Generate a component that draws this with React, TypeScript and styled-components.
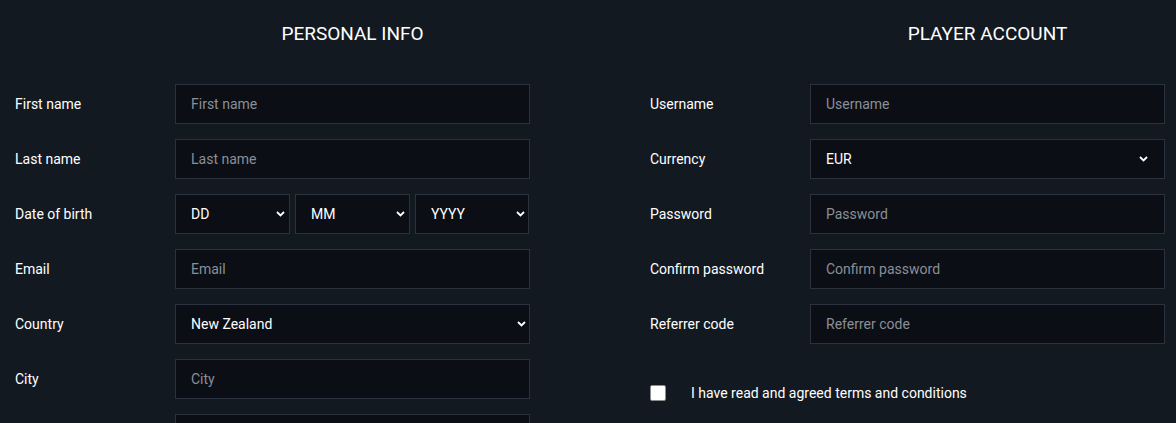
import React from "react";
import styled, { createGlobalStyle } from "styled-components";

const GlobalStyle = createGlobalStyle`
  html, body {
    margin: 0;
    padding: 0;
    background: #131921;
  }
  body {
    font-family: Roboto, "Liberation Sans", sans-serif;
    color: #ffffff;
  }
`;

const Chevron = ({ right }: { right: number }) => (
  <ArrowIcon $right={right} width="9" height="6" viewBox="0 0 9 6">
    <path d="M1 1l3.5 3.5L8 1" fill="none" stroke="#ffffff" strokeWidth="1.8" />
  </ArrowIcon>
);

const SelectBox = ({
  value,
  arrowRight = 16,
}: {
  value: string;
  arrowRight?: number;
}) => (
  <SelectWrap>
    <Select defaultValue={value}>
      <option>{value}</option>
    </Select>
    <Chevron right={arrowRight} />
  </SelectWrap>
);

const App = () => {
  return (
    <Page>
      <GlobalStyle />
      <Column>
        <Heading>PERSONAL INFO</Heading>
        <Row>
          <Label>First name</Label>
          <Input placeholder="First name" />
        </Row>
        <Row>
          <Label>Last name</Label>
          <Input placeholder="Last name" />
        </Row>
        <Row>
          <Label>Date of birth</Label>
          <DateGroup>
            <SelectBox value="DD" arrowRight={5} />
            <SelectBox value="MM" arrowRight={5} />
            <SelectBox value="YYYY" arrowRight={4} />
          </DateGroup>
        </Row>
        <Row>
          <Label>Email</Label>
          <Input placeholder="Email" />
        </Row>
        <Row>
          <Label>Country</Label>
          <SelectBox value="New Zealand" arrowRight={4} />
        </Row>
        <Row>
          <Label>City</Label>
          <Input placeholder="City" />
        </Row>
        <Row>
          <Label>Address</Label>
          <Input placeholder="Address" />
        </Row>
      </Column>

      <Column>
        <Heading>PLAYER ACCOUNT</Heading>
        <Row>
          <Label>Username</Label>
          <Input placeholder="Username" />
        </Row>
        <Row>
          <Label>Currency</Label>
          <SelectBox value="EUR" arrowRight={17} />
        </Row>
        <Row>
          <Label>Password</Label>
          <Input type="password" placeholder="Password" />
        </Row>
        <Row>
          <Label>Confirm password</Label>
          <Input type="password" placeholder="Confirm password" />
        </Row>
        <Row>
          <Label>Referrer code</Label>
          <Input placeholder="Referrer code" />
        </Row>
        <CheckRow>
          <CheckBox type="checkbox" />
          <CheckText>I have read and agreed terms and conditions</CheckText>
        </CheckRow>
      </Column>
    </Page>
  );
};

const Page = styled.div`
  display: grid;
  grid-template-columns: 515px 515px;
  column-gap: 120px;
  padding: 0 11px 0 15px;
  height: 423px;
  overflow: hidden;
`;

const Column = styled.div`
  display: flex;
  flex-direction: column;
  gap: 15px;
`;

const Heading = styled.h2`
  margin: 23px 0 25px 160px;
  text-align: center;
  font-size: 19px;
  font-weight: 400;
  line-height: 21px;
  color: #ffffff;
`;

const Row = styled.div`
  display: grid;
  grid-template-columns: 160px 355px;
  align-items: center;
  height: 40px;
`;

const Label = styled.label`
  font-size: 14px;
  font-weight: 400;
  color: #ffffff;
`;

const Input = styled.input`
  box-sizing: border-box;
  width: 100%;
  height: 40px;
  padding: 0 15px;
  background: #0b0e14;
  border: 1px solid #2c323d;
  color: #ffffff;
  font-family: Roboto, "Liberation Sans", sans-serif;
  font-size: 14px;
  outline: none;

  &::placeholder {
    color: #8a8f98;
  }
`;

const DateGroup = styled.div`
  display: grid;
  grid-template-columns: 115px 115px 114px;
  gap: 5px;
`;

const SelectWrap = styled.div`
  position: relative;
  width: 100%;
`;

const Select = styled.select`
  box-sizing: border-box;
  appearance: none;
  width: 100%;
  height: 40px;
  padding: 0 15px;
  background: #0b0e14;
  border: 1px solid #2c323d;
  border-radius: 0;
  color: #ffffff;
  font-family: Roboto, "Liberation Sans", sans-serif;
  font-size: 14px;
  font-weight: 400;
  outline: none;
`;

const ArrowIcon = styled.svg<{ $right: number }>`
  position: absolute;
  top: 17px;
  right: ${(p) => p.$right}px;
  pointer-events: none;
`;

const CheckRow = styled.div`
  display: flex;
  align-items: center;
  gap: 25px;
  margin-top: 24px;
  height: 20px;
`;

const CheckBox = styled.input`
  appearance: none;
  box-sizing: border-box;
  margin: 0;
  width: 16px;
  height: 16px;
  background: #ffffff;
  border: 1px solid #8d8d8d;
  border-radius: 2px;
`;

const CheckText = styled.span`
  font-size: 14px;
  font-weight: 400;
  color: #ffffff;
`;

export default App;
